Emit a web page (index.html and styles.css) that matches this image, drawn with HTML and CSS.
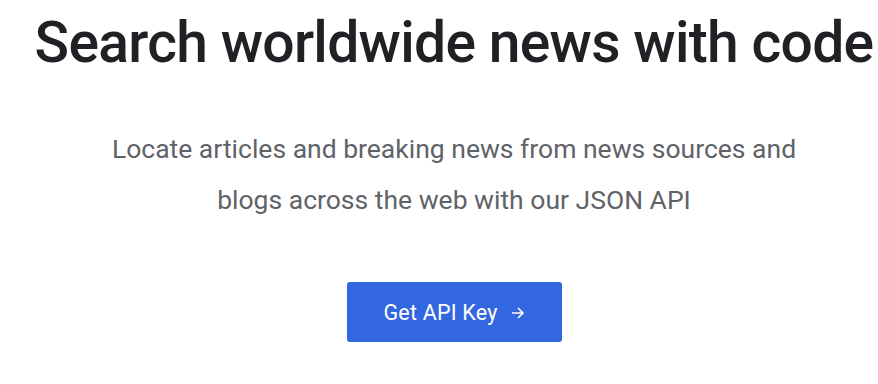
FILE: index.html
```html
<!DOCTYPE html>
<html lang="en">
<head>
    <meta charset="UTF-8">
    <meta name="viewport" content="width=device-width, initial-scale=1.0">
    <title>News API</title>
    <link rel="stylesheet" href="styles.css">
</head>
<body>
    <section class="hero">
        <h1>Search worldwide news with code</h1>
        <p class="lead">Locate articles and breaking news from news sources and<br>blogs across the web with our JSON API</p>
        <a class="cta" href="#">
            Get API Key
            <svg class="arrow" width="14" height="14" viewBox="0 0 14 14" fill="none" stroke="currentColor" stroke-width="1.6">
                <path d="M1 7h11M7 2l5 5-5 5"/>
            </svg>
        </a>
    </section>
</body>
</html>
```

FILE: styles.css
```css
body {
    margin: 0;
    font-family: Roboto, "Open Sans", sans-serif;
    background: #fff;
}

.hero {
    padding: 11px 0 0 30px;
    text-align: center;
}

.hero h1 {
    margin: 0;
    font-size: 57px;
    font-weight: 500;
    letter-spacing: -0.7px;
    line-height: 64px;
    color: #202124;
    white-space: nowrap;
}

.lead {
    margin: 48px 0 0;
    font-size: 26.5px;
    line-height: 51px;
    color: #5f6368;
}

.cta {
    display: flex;
    align-items: center;
    justify-content: center;
    gap: 13px;
    margin: 57px auto 0;
    width: 215px;
    height: 60px;
    background: #3367e0;
    color: #fff;
    font-size: 21.5px;
    letter-spacing: 0.2px;
    text-decoration: none;
    border-radius: 3px;
}

.cta .arrow {
    margin-top: 1px;
}
```
